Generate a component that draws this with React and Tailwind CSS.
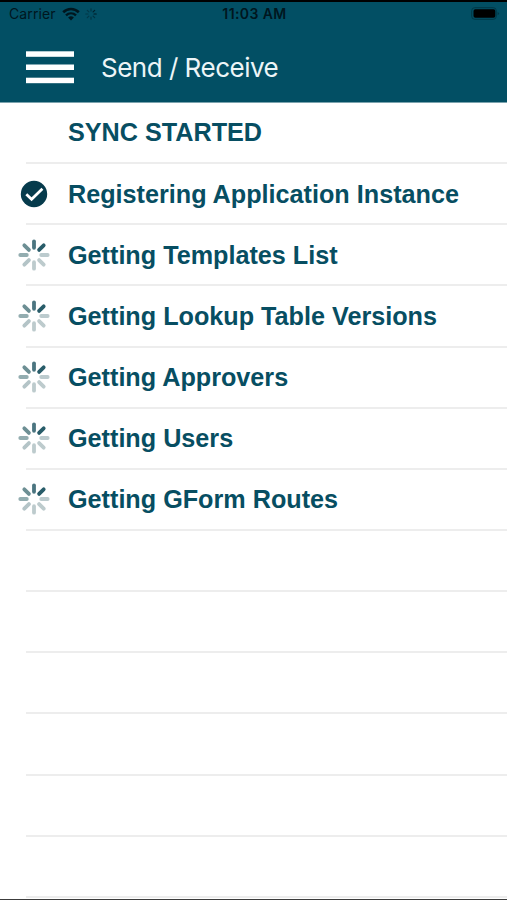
const steps = [
  { label: 'SYNC STARTED' },
  { label: 'Registering Application Instance', status: 'done' },
  { label: 'Getting Templates List', status: 'loading' },
  { label: 'Getting Lookup Table Versions', status: 'loading' },
  { label: 'Getting Approvers', status: 'loading' },
  { label: 'Getting Users', status: 'loading' },
  { label: 'Getting GForm Routes', status: 'loading' },
  {},
  {},
  {},
  {},
  {},
  {},
];

// clockwise from the top
const spokes = ['#4b7580', '#285c69', '#bccbce', '#bdcbcd', '#bdcbcd', '#b4c4c7', '#93adb0', '#6d8f94'];

function Spinner() {
  return (
    <svg viewBox="0 0 32 32" className="size-8 shrink-0">
      {spokes.map((color, i) => (
        <line
          key={i}
          x1="16"
          y1="2.3"
          x2="16"
          y2="8.8"
          stroke={color}
          strokeWidth="3.8"
          strokeLinecap="round"
          transform={`rotate(${i * 45} 16 16)`}
        />
      ))}
    </svg>
  );
}

function CheckCircle() {
  return (
    <svg viewBox="0 0 32 32" className="size-8 shrink-0">
      <circle cx="16" cy="16" r="13.2" fill="#063b4c" />
      <path d="M8.3 16.2 L13.6 21.3 L24.4 10.7" fill="none" stroke="#fff" strokeWidth="2.7" />
    </svg>
  );
}

function StatusBar() {
  return (
    <div className="flex h-[25px] items-center justify-between border-t-2 border-black pl-[9px] pr-[7px] text-[#00161e]">
      <div className="flex w-[160px] items-center">
        <span className="w-[47px] whitespace-nowrap text-[14px] leading-none tracking-[0.1px]">Carrier</span>
        <svg viewBox="0 0 18 14" className="ml-[6px] h-[14px] w-[18px]" fill="none" stroke="currentColor">
          <path d="M1.2 5.3 C5.7 0.9 12.3 0.9 16.8 5.3" strokeWidth="2.6" />
          <path d="M4 8.4 C6.9 5.7 11.1 5.7 14 8.4" strokeWidth="2.4" />
          <path d="M6.1 10.5 Q9 8.2 11.9 10.5 L9 13.4 Z" fill="currentColor" stroke="none" />
        </svg>
        <svg viewBox="0 0 12 12" className="ml-[5px] size-[12px]" stroke="currentColor" strokeLinecap="round">
          {[0.45, 0.8, 0.9, 0.5, 0.45, 0.4, 0.4, 0.4].map((opacity, i) => (
            <line
              key={i}
              x1="6"
              y1="0.8"
              x2="6"
              y2="3"
              strokeWidth="1.2"
              opacity={opacity}
              transform={`rotate(${i * 45} 6 6)`}
            />
          ))}
        </svg>
      </div>
      <span className="whitespace-nowrap text-[14px] font-semibold leading-none tracking-[0.4px]">11:03 AM</span>
      <div className="flex w-[160px] justify-end">
        <svg viewBox="0 0 30 13" className="h-[13px] w-[30px]">
          <rect x="1.7" y="0.7" width="24.6" height="11.6" rx="3" fill="none" stroke="#003746" strokeWidth="1" />
          <rect x="3.5" y="2.2" width="21.8" height="8.6" rx="1.8" fill="#000" />
          <path d="M27.6 4.7 Q30.4 6.5 27.6 8.3 Z" fill="#003746" />
        </svg>
      </div>
    </div>
  );
}

function MenuIcon() {
  return (
    <svg viewBox="0 0 48 34" className="h-[34px] w-[48px]" fill="#fff">
      <rect y="1.3" width="48" height="5.5" />
      <rect y="14.5" width="48" height="5.5" />
      <rect y="27.7" width="48" height="5.5" />
    </svg>
  );
}

function App() {
  return (
    <div className="flex h-[900px] w-full flex-col overflow-hidden border-b border-[#3c3c3c] bg-white">
      <header className="h-[103px] shrink-0 border-b border-[#7ba3ae] bg-[#024f64] font-[Inter,sans-serif]">
        <StatusBar />
        <div className="flex h-[84px] items-center pl-[26px]">
          <MenuIcon />
          <h1 className="ml-[27px] whitespace-nowrap text-[26px] font-normal tracking-[-0.5px] text-[#edf5f7]">
            Send / Receive
          </h1>
        </div>
      </header>

      <ul className="font-['Liberation_Sans',Arial,sans-serif]">
        {steps.map((step, i) => (
          <li key={i} className="flex h-[61.15px] pl-[18px]">
            <div className="flex w-[8px] shrink-0 items-center pb-[2px]">
              {step.status === 'done' && <CheckCircle />}
              {step.status === 'loading' && <Spinner />}
            </div>
            <div className="flex flex-1 items-center border-b-2 border-[#ededed] pl-[42px] pt-[1px]">
              <span className="whitespace-nowrap text-[25.2px] font-bold leading-none text-[#074e62]">{step.label}</span>
            </div>
          </li>
        ))}
      </ul>
    </div>
  );
}

export default App;
